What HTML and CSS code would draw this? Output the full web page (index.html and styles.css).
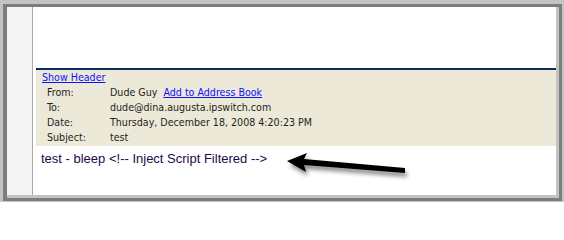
FILE: index.html
```html
<!DOCTYPE html>
<html>
<head>
<meta charset="utf-8">
<link rel="stylesheet" href="styles.css">
</head>
<body>
<div class="frame">
  <div class="bevel">
    <div class="inner">
      <aside class="side"></aside>
      <main class="main">
        <div class="spacer"></div>
        <section class="header">
          <div class="row"><a class="link show" href="#">Show Header</a></div>
          <div class="row field"><span class="label">From:</span><span class="value">Dude Guy <a class="link add" href="#">Add to Address Book</a></span></div>
          <div class="row field"><span class="label">To:</span><span class="value">dude@dina.augusta.ipswitch.com</span></div>
          <div class="row field"><span class="label">Date:</span><span class="value">Thursday, December 18, 2008 4:20:23 PM</span></div>
          <div class="row field"><span class="label">Subject:</span><span class="value">test</span></div>
        </section>
        <p class="body-text">test - bleep &lt;!-- Inject Script Filtered --&gt;</p>
      </main>
    </div>
  </div>
  <svg class="arrow" width="564" height="202" viewBox="0 0 564 202" aria-hidden="true">
    <defs>
      <filter id="shadow" x="-20%" y="-50%" width="140%" height="200%">
        <feDropShadow dx="2" dy="4" stdDeviation="2" flood-color="#000" flood-opacity="0.45"/>
      </filter>
    </defs>
    <polygon filter="url(#shadow)" fill="#000" points="287,161 307,153 304,159 405,168 405,173 304,165 306,172"/>
  </svg>
</div>
</body>
</html>
```
FILE: styles.css
```css
body {
  margin: 0;
  background: #fff;
}
.frame {
  position: relative;
  width: 564px;
  height: 202px;
  box-sizing: border-box;
  background: #c3c3c3;
  padding: 4px 2px 1px 3px;
}
.bevel {
  height: 100%;
  box-sizing: border-box;
  border: 3px solid #7d7d7d;
  border-left-width: 4px;
}
.inner {
  height: 100%;
  box-sizing: border-box;
  border-right: 3px solid #c3c3c3;
  border-bottom: 3px solid #c3c3c3;
  display: flex;
  background: #fff;
}
.side {
  width: 25px;
  flex: none;
  background: #f4f4f4;
  border-right: 1px solid #a9a9a9;
}
.main {
  flex: 1;
  padding-left: 3px;
}
.spacer {
  height: 61px;
}
.header {
  border-top: 2px solid #0b2c5f;
  background: #ece9d8;
  height: 76px;
  font-family: "DejaVu Sans Condensed", "DejaVu Sans", sans-serif;
  font-size: 10.6px;
  color: #1e1e1e;
}
.row {
  line-height: 15px;
  height: 15px;
  white-space: nowrap;
}
.show {
  margin-left: 6px;
}
.link {
  color: #1010ff;
  text-decoration: underline;
}
.field {
  display: flex;
  padding-left: 11px;
}
.label {
  width: 63px;
  flex: none;
}
.add {
  margin-left: 3px;
}
.body-text {
  margin: 4px 0 0 5px;
  font-family: "Liberation Sans", Arial, sans-serif;
  font-size: 13px;
  line-height: 17px;
  color: #26084a;
}
.arrow {
  position: absolute;
  left: 0;
  top: 0;
  pointer-events: none;
}
```
